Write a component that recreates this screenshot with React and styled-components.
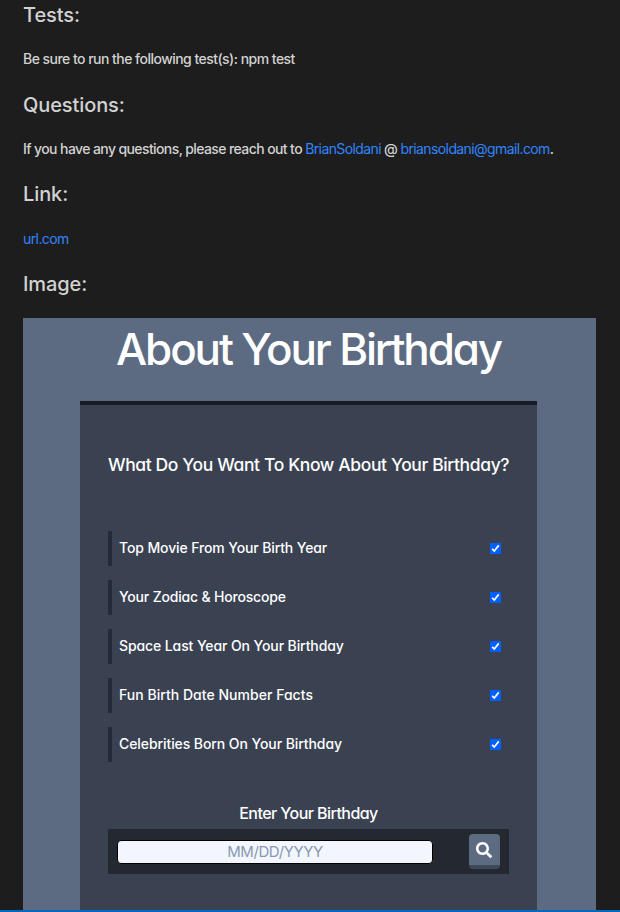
import React from "react";
import styled, { createGlobalStyle } from "styled-components";
import { FaSearch } from "react-icons/fa";

const GlobalStyle = createGlobalStyle`
  *, *::before, *::after { box-sizing: border-box; }
  html, body { margin: 0; padding: 0; background: #1d1d1d; }
  body { overflow: hidden; font-family: Inter, "Liberation Sans", sans-serif; }
`;

const Preview = styled.main`
  display: flex;
  flex-direction: column;
  height: 912px;
  padding: 0 24px 0 23px;
  border-bottom: 2px solid #0068bf;
  color: #d2d2d2;
  white-space: nowrap;
  overflow: hidden;
`;

const Heading = styled.h2`
  flex: none;
  margin: 0;
  height: 30px;
  line-height: 30px;
  font-size: 20px;
  font-weight: 450;
  letter-spacing: -0.1px;
`;

const Paragraph = styled.p`
  flex: none;
  margin: 0;
  padding: 18.3px 0 20px;
  height: 59.67px;
  line-height: 21px;
  font-size: 14px;
  font-weight: 450;
  letter-spacing: ${({ $spacing }) => $spacing}px;
`;

const Link = styled.a`
  color: #2f86ff;
  font-weight: 400;
  text-decoration: none;
`;

const Picture = styled.section`
  flex: 1;
  display: flex;
  flex-direction: column;
  align-items: center;
  margin-top: 19px;
  padding-right: 2px;
  background: #5d6b82;
  color: #fff;
  font-feature-settings: "cv11";
`;

const Title = styled.h1`
  margin: 0;
  height: 83px;
  line-height: 62px;
  font-size: 44px;
  font-weight: 500;
  letter-spacing: -2.15px;
`;

const Card = styled.div`
  flex: 1;
  width: 457px;
  padding: 48px 28px 0;
  border-top: 4px solid #191c26;
  background: #3a4252;
`;

const Prompt = styled.h3`
  margin: 0 0 54px;
  height: 24px;
  line-height: 24px;
  font-size: 17.5px;
  font-weight: 500;
  text-align: center;
  letter-spacing: -0.38px;
`;

const Options = styled.div`
  display: grid;
  grid-auto-rows: 35px;
  row-gap: 13.9px;
`;

const Option = styled.label`
  display: flex;
  align-items: center;
  justify-content: space-between;
  padding: 0 8px 0 7px;
  border-left: 4px solid #252a38;
  font-size: 14px;
  font-weight: 500;
  letter-spacing: ${({ $spacing }) => $spacing}px;
`;

const OptionText = styled.span`
  padding-bottom: 2px;
`;

const Checkbox = styled.span`
  display: grid;
  place-items: center;
  width: 11px;
  height: 11px;
  background: #0060ff;
`;

const EntryLabel = styled.div`
  margin-top: 41px;
  height: 26px;
  line-height: 20px;
  font-size: 16px;
  font-weight: 500;
  text-align: center;
  letter-spacing: -0.55px;
`;

const SearchBar = styled.div`
  display: flex;
  align-items: center;
  justify-content: space-between;
  height: 45px;
  padding: 0 9px;
  background: #242830;
`;

const DateInput = styled.input`
  width: 316px;
  height: 24px;
  margin-top: 1px;
  padding: 0;
  border: 1px solid #000;
  border-radius: 4px;
  background: #f3f7fd;
  font: 400 15px Inter, "Liberation Sans", sans-serif;
  letter-spacing: -0.4px;
  text-align: center;
  &::placeholder { color: #8997b2; opacity: 1; }
`;

const SearchButton = styled.button`
  display: grid;
  place-items: center;
  width: 31px;
  height: 35px;
  padding: 1px 1px 0 0;
  border: 0;
  border-bottom: 4px solid #3f4859;
  border-radius: 4px;
  background: #5d6b82;
  color: #fff;
`;

const options = [
  ["Top Movie From Your Birth Year", -0.12],
  ["Your Zodiac & Horoscope", -0.18],
  ["Space Last Year On Your Birthday", -0.1],
  ["Fun Birth Date Number Facts", 0.03],
  ["Celebrities Born On Your Birthday", -0.08],
];

export default function App() {
  return (
    <>
      <GlobalStyle />
      <Preview>
        <Heading>Tests:</Heading>
        <Paragraph $spacing={-0.53}>Be sure to run the following test(s): npm test</Paragraph>
        <Heading>Questions:</Heading>
        <Paragraph $spacing={-0.6}>
          If you have any questions, please reach out to <Link>BrianSoldani</Link> @{" "}
          <Link>briansoldani@gmail.com</Link>.
        </Paragraph>
        <Heading>Link:</Heading>
        <Paragraph $spacing={-0.58}><Link>url.com</Link></Paragraph>
        <Heading>Image:</Heading>
        <Picture>
          <Title>About Your Birthday</Title>
          <Card>
            <Prompt>What Do You Want To Know About Your Birthday?</Prompt>
            <Options>
              {options.map(([text, spacing]) => (
                <Option key={text} $spacing={spacing}>
                  <OptionText>{text}</OptionText>
                  <Checkbox>
                    <svg width="11" height="11" viewBox="0 0 11 11" fill="none" stroke="#fff" strokeWidth="1.7">
                      <path d="M2.2 5.8 4.3 8 8.7 2.4" />
                    </svg>
                  </Checkbox>
                </Option>
              ))}
            </Options>
            <EntryLabel>Enter Your Birthday</EntryLabel>
            <SearchBar>
              <DateInput placeholder="MM/DD/YYYY" />
              <SearchButton><FaSearch size={16} /></SearchButton>
            </SearchBar>
          </Card>
        </Picture>
      </Preview>
    </>
  );
}
